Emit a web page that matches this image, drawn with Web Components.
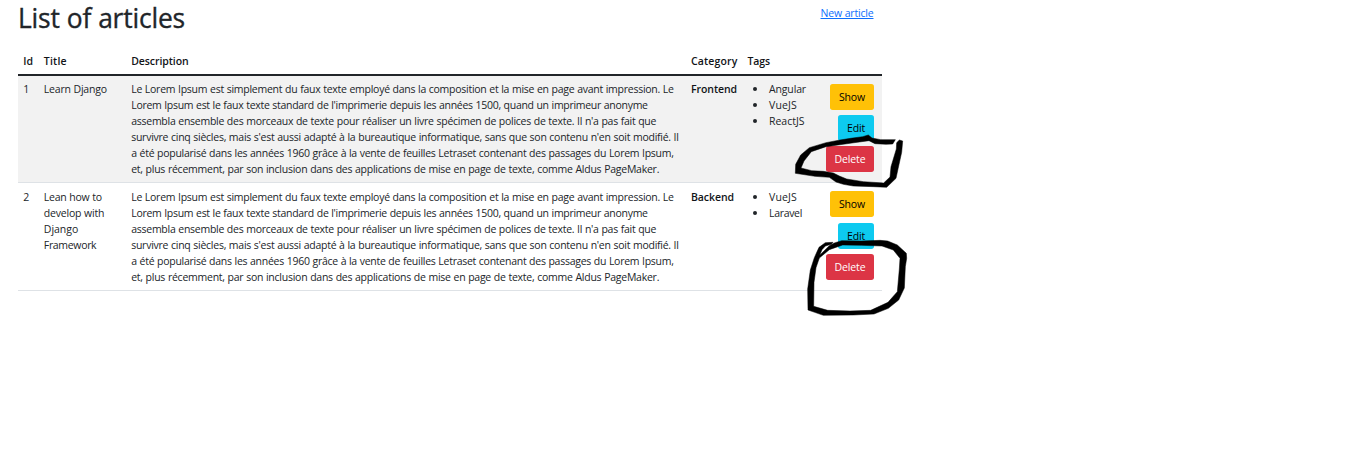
<!DOCTYPE html>
<html lang="fr">
<head>
<meta charset="utf-8">
<title>List of articles</title>
<style>
html,body{margin:0;background:#fff}
body{font:10.5px/16px "Open Sans","Noto Sans",sans-serif;color:#212529;height:460px;overflow:hidden}
</style>
</head>
<body>
<article-page></article-page>
<script>
const define = (name, html, setup) => customElements.define(name, class extends HTMLElement {
  connectedCallback() {
    if (this.shadowRoot) return;
    const root = this.attachShadow({mode: 'open'});
    root.innerHTML = typeof html === 'function' ? html(this) : html;
    if (setup) setup(this, root);
  }
});

// One line of text, tracked so that it fills the width given in "w".
define('fit-line', '<style>:host{display:block;white-space:nowrap}span{display:inline-block;white-space:pre;word-spacing:.3px;text-decoration:var(--line,none);text-underline-offset:1px}</style><span><slot></slot></span>', (el, root) => {
  const span = root.querySelector('span');
  const w = parseFloat(el.getAttribute('w'));
  const n = el.textContent.length;
  const natural = span.getBoundingClientRect().width;
  if (w) span.style.letterSpacing = ((w - natural) / n).toFixed(4) + 'px';
});

define('action-button', `<style>
:host{display:flex;box-sizing:border-box;height:26px;align-items:center;justify-content:center;border-radius:2.67px;color:#000;background:#ffc107;width:44px}
:host([kind=edit]){background:#0dcaf0;width:36px}
:host([kind=delete]){background:#dc3545;color:#fff;width:48px}
</style><slot></slot>`);

define('tag-item', `<style>
:host{display:flex;align-items:center;height:16px}
i{width:4px;height:4px;border-radius:50%;background:#212529;margin:0 11.5px 0 6px}
</style><i></i><slot></slot>`);

const GRID = 'display:grid;grid-template-columns:20.5px 87.4px 559.8px 56.5px 65px 1fr;box-sizing:border-box;padding:0 8px 0 5.3px';

define('table-head', `<style>
:host{${GRID};height:29px;padding-top:6px;border-bottom:2px solid #212529;font-weight:600;color:#111417}
</style>
<fit-line w="9.5">Id</fit-line><fit-line w="23">Title</fit-line><fit-line w="57.5">Description</fit-line><fit-line w="46.5">Category</fit-line><fit-line w="22.5">Tags</fit-line>`);

const LINES = [
  ["Le Lorem Ipsum est simplement du faux texte employé dans la composition et la mise en page avant impression. Le", 542.5],
  ["Lorem Ipsum est le faux texte standard de l'imprimerie depuis les années 1500, quand un imprimeur anonyme", 516.5],
  ["assembla ensemble des morceaux de texte pour réaliser un livre spécimen de polices de texte. Il n'a pas fait que", 525],
  ["survivre cinq siècles, mais s'est aussi adapté à la bureautique informatique, sans que son contenu n'en soit modifié. Il", 547.5],
  ["a été popularisé dans les années 1960 grâce à la vente de feuilles Letraset contenant des passages du Lorem Ipsum,", 542.5],
  ["et, plus récemment, par son inclusion dans des applications de mise en page de texte, comme Aldus PageMaker.", 528]
];

define('article-row', el => `<style>
:host{${GRID};height:107px;border-bottom:1px solid #dee2e6}
:host([striped]){background:#f2f2f2}
.c{padding-top:var(--t,5px)}
.cat{font-weight:600;color:#111417}
.act{display:flex;flex-direction:column;align-items:flex-end;gap:5px;padding-top:8px}
:host([last]){height:108px;--t:6px}
:host([last]) ::slotted([kind=edit]){margin-top:1px}
</style>
<div class="c">${el.getAttribute('no')}</div>
<div class="c"><slot name="title"></slot></div>
<div class="c">${LINES.map(l => `<fit-line w="${l[1]}">${l[0]}</fit-line>`).join('')}</div>
<div class="c cat"><slot name="category"></slot></div>
<div class="c"><slot name="tag"></slot></div>
<div class="act"><slot></slot></div>`);

define('page-header', `<style>
:host{display:flex;justify-content:space-between;height:47px;padding-right:8.5px;align-items:flex-start}
h1{margin:0;font-size:26.4px;line-height:32px;font-weight:500;padding-top:2px;-webkit-text-stroke:.35px #212529}
a{color:#0d6efd;--line:underline;margin-top:5px}
</style>
<h1><fit-line w="167">List of articles</fit-line></h1>
<a><fit-line w="53">New article</fit-line></a>`);

// Freehand marker loops drawn over the delete buttons.
define('marker-loops', `<style>:host{position:absolute;left:780px;top:125px;pointer-events:none}svg{display:block}</style>
<svg width="140" height="195" viewBox="0 0 420 585" fill-rule="evenodd" stroke="#000" stroke-width="1.5" stroke-linejoin="round">
<path d="M46 145L47 118L62 90L88 68L138 53L180 45L212 40L248 35L265 30L276 39L302 44L346 44L338 57L318 58L285 56L267 47L216 54L138 65L94 80L72 108L63 129L95 137L130 139L160 144L178 153L200 162L250 170L311 174L330 156L333 125L349 72L350 53L358 45L368 48L365 82L354 132L348 160L320 187L280 185L220 183L190 178L168 171L148 157L105 154L60 147Z"/>
<path transform="translate(0 180)" d="M84 375L83 312L91 255L103 218L117 187L136 173L159 172L154 178L136 183L126 194L119 211L148 182L163 174L185 167L245 168L300 166L323 168L352 180L379 205L380 220L376 245L373 309L356 345L325 370L282 387L220 390L130 391L104 382ZM101 364L102 292L108 248L118 219L148 194L188 180L245 181L306 183L340 195L360 220L358 252L352 320L324 352L272 376L210 378L143 376Z"/>
</svg>`);

define('article-page', `<style>
:host{display:block;width:864px;margin-left:18px}
</style>
<page-header></page-header>
<table-head></table-head>
<article-row no="1" striped>
<fit-line slot="title" w="63">Learn Django</fit-line>
<fit-line slot="category" w="46">Frontend</fit-line>
<tag-item slot="tag"><fit-line w="37">Angular</fit-line></tag-item>
<tag-item slot="tag"><fit-line w="28">VueJS</fit-line></tag-item>
<tag-item slot="tag"><fit-line w="35.5">ReactJS</fit-line></tag-item>
<action-button><fit-line w="26">Show</fit-line></action-button>
<action-button kind="edit"><fit-line w="18">Edit</fit-line></action-button>
<action-button kind="delete"><fit-line w="31">Delete</fit-line></action-button>
</article-row>
<article-row no="2" last>
<fit-line slot="title" w="58">Lean how to</fit-line>
<fit-line slot="title" w="60.5">develop with</fit-line>
<fit-line slot="title" w="34.5">Django</fit-line>
<fit-line slot="title" w="52.5">Framework</fit-line>
<fit-line slot="category" w="43">Backend</fit-line>
<tag-item slot="tag"><fit-line w="28">VueJS</fit-line></tag-item>
<tag-item slot="tag"><fit-line w="33">Laravel</fit-line></tag-item>
<action-button><fit-line w="26">Show</fit-line></action-button>
<action-button kind="edit"><fit-line w="18">Edit</fit-line></action-button>
<action-button kind="delete"><fit-line w="31">Delete</fit-line></action-button>
</article-row>
<marker-loops></marker-loops>`);
</script>
</body>
</html>
